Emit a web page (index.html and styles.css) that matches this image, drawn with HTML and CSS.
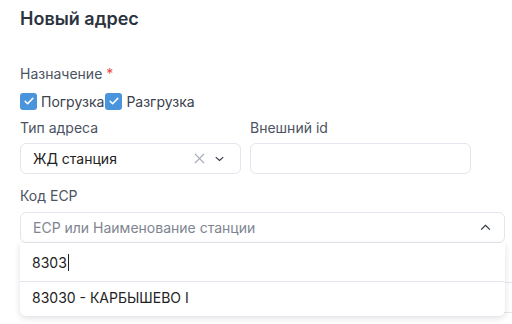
FILE: index.html
```html
<!DOCTYPE html>
<html lang="ru">
<head>
<meta charset="utf-8">
<link rel="stylesheet" href="styles.css">
</head>
<body>
<div class="page">
  <h2 class="title">Новый адрес</h2>
  <div class="label purpose">Назначение <span class="req">*</span></div>
  <div class="checks">
    <label class="check"><span class="box"><svg viewBox="0 0 16 16" width="12" height="12"><path d="M3 8.5l3.2 3.2L13 4.5" fill="none" stroke="#fff" stroke-width="2" stroke-linecap="round" stroke-linejoin="round"/></svg></span>Погрузка</label>
    <label class="check"><span class="box"><svg viewBox="0 0 16 16" width="12" height="12"><path d="M3 8.5l3.2 3.2L13 4.5" fill="none" stroke="#fff" stroke-width="2" stroke-linecap="round" stroke-linejoin="round"/></svg></span>Разгрузка</label>
  </div>
  <div class="row">
    <div class="field">
      <div class="label">Тип адреса</div>
      <div class="control">
        <span class="value">ЖД станция</span>
        <span class="icons">
          <svg class="clear" viewBox="0 0 12 12" width="11" height="11"><path d="M1 1l10 10M11 1L1 11" stroke="#a3abb6" stroke-width="1.4" fill="none"/></svg>
          <svg class="chev" viewBox="0 0 12 8" width="9" height="6"><path d="M1 1.5l5 4.5 5-4.5" stroke="#2f3540" stroke-width="1.5" fill="none"/></svg>
        </span>
      </div>
    </div>
    <div class="field">
      <div class="label">Внешний id</div>
      <div class="control"></div>
    </div>
  </div>
  <div class="label esr">Код ЕСР</div>
  <div class="select-wrap">
    <div class="control wide">
      <span class="placeholder">ЕСР или Наименование станции</span>
      <svg class="chev" viewBox="0 0 12 8" width="11" height="7"><path d="M1 6.5l5-5 5 5" stroke="#2f3540" stroke-width="1.4" fill="none"/></svg>
    </div>
    <div class="dropdown">
      <div class="search">8303<span class="caret"></span></div>
      <div class="option">83030 - КАРБЫШЕВО I</div>
    </div>
  </div>
  <div class="under"></div>
</div>
</body>
</html>
```
FILE: styles.css
```css
* { box-sizing: border-box; }
html, body { margin: 0; padding: 0; background: #fff; }
body { font-family: Inter, Roboto, "Noto Sans", sans-serif; color: #222; width: 512px; height: 324px; overflow: hidden; }
.page { padding: 8px 7px 0 20px; }
.title { margin: 0; font-size: 18px; font-weight: 600; color: #2c3340; line-height: 22px; }
.label { font-size: 14px; color: #4b5361; line-height: 18px; }
.purpose { margin-top: 35px; }
.req { color: #e5484d; }
.checks { display: flex; margin-top: 9px; height: 18px; align-items: center; }
.check { display: flex; align-items: center; font-size: 14px; color: #3a414d; margin-right: 1px; }
.box { width: 17px; height: 17px; border-radius: 3px; background: #4a94dc; display: flex; align-items: center; justify-content: center; margin-right: 4px; }
.row { display: flex; gap: 9px; margin-top: 9px; }
.field { width: 221px; display: flex; flex-direction: column; gap: 6px; }
.control { height: 31px; border: 1px solid #e3e7ed; border-radius: 6px; display: flex; align-items: center; padding: 0 12px; background: #fff; }
.value { flex: 1; font-size: 14px; color: #222; }
.icons { display: flex; align-items: center; gap: 10px; margin-right: 4px; }
.esr { margin-top: 13px; }
.select-wrap { position: relative; margin-top: 7px; width: 485px; z-index: 2; }
.wide { justify-content: space-between; }
.wide .chev { margin-right: 1px; }
.placeholder { font-size: 14px; color: #7e8590; }
.dropdown { position: absolute; left: 0; right: 0; top: 31px; background: #fff; border-radius: 0 0 6px 6px; box-shadow: 0 2px 6px rgba(20, 30, 50, 0.14); }
.search { height: 39px; display: flex; align-items: center; padding: 0 12px; font-size: 14px; color: #222; border-bottom: 1px solid #e3e7ed; }
.caret { display: inline-block; width: 1px; height: 17px; background: #222; margin-left: 1px; }
.option { height: 34px; display: flex; align-items: center; padding: 0 12px 3px; font-size: 14px; color: #222; }
.under { margin-top: 39px; margin-right: -7px; height: 31px; border: 1px solid #e3e7ed; border-right: none; border-radius: 6px 0 0 6px; }
```
